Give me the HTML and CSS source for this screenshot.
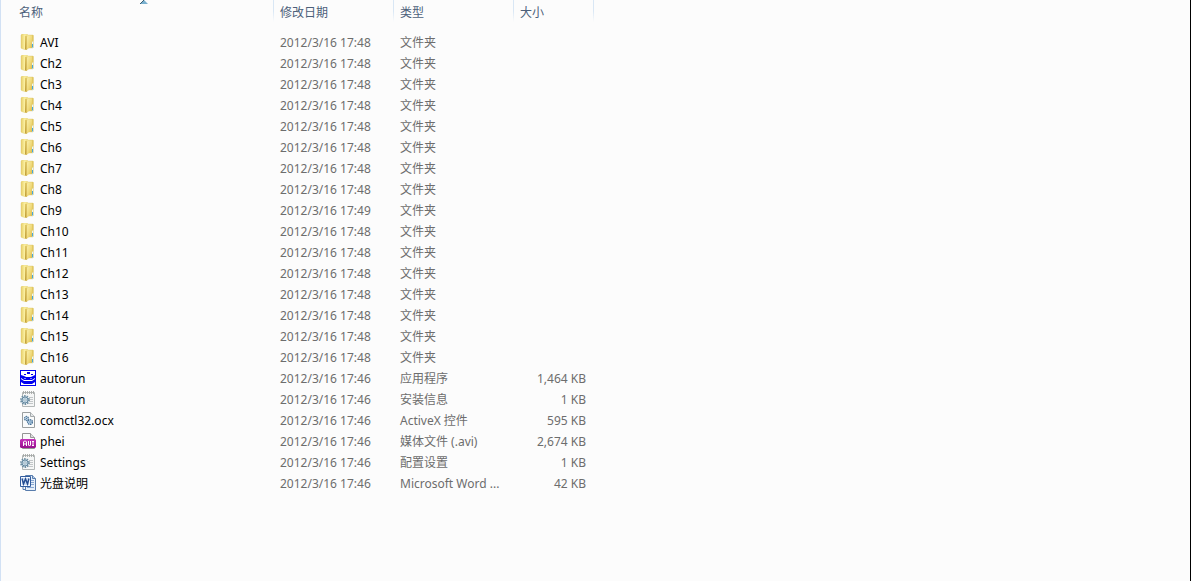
FILE: index.html
```
<!DOCTYPE html>
<html lang="zh-CN">
<head>
<meta charset="utf-8">
<title>文件列表</title>
<link rel="stylesheet" href="styles.css">
</head>
<body>
<svg class="sprite" aria-hidden="true">
  <defs>
    <linearGradient id="gold" x1="0" x2="1" y1="0" y2="0">
      <stop offset="0" stop-color="#e6cd66"/><stop offset=".3" stop-color="#fbf1a4"/><stop offset="1" stop-color="#dfc258"/>
    </linearGradient>
    <linearGradient id="flap" x1="0" x2="1" y1="0" y2="1">
      <stop offset="0" stop-color="#faf1b0"/><stop offset=".55" stop-color="#efd97a"/><stop offset="1" stop-color="#d8b546"/>
    </linearGradient>
    <linearGradient id="crease" x1="0" x2="0" y1="0" y2="1">
      <stop offset="0" stop-color="#e3ca69"/><stop offset="1" stop-color="#bf9b35"/>
    </linearGradient>
    <linearGradient id="pink" x1="0" x2="0" y1="0" y2="1">
      <stop offset="0" stop-color="#c432ba"/><stop offset="1" stop-color="#98108e"/>
    </linearGradient>
  </defs>
  <symbol id="folder" viewBox="0 0 16 16">
    <path d="M2 0h5l1 1h5l.5.5v12l-.5.5H8L6 16l-4.500-1.500L1 14V1z" fill="url(#gold)" stroke="#dfc972" stroke-width=".4"/>
    <path d="M5 2l1.500-.5L7.500 3v12L6 16l-1-1z" fill="url(#crease)"/>
    <path d="M7 3l1.500-1.500H12V14H9l-2.500 1.800z" fill="url(#flap)"/>
    <path d="M12 8l1.300-1v7H12z" fill="#e8f4f5"/>
    <path d="M12 10h1v3.500h-1z" fill="#48a6d8"/>
  </symbol>
  <symbol id="app" viewBox="0 0 16 16">
    <path d="M0 0h16v16H0z" fill="#0000f0"/>
    <path d="M1 1h14v14H1z" fill="#fff"/>
    <path d="M7 2h3v2H7zM4 4h2v1H4zM11 4h2v1h-2z" fill="#0000f0"/>
    <path d="M1 5l3 1 2 1h5l2-1 2-1v3l-3 2H4L1 8z" fill="#0000f0"/>
    <path d="M1 9l3 2h8l3-2v3l-3 2H4l-3-2z" fill="#0000f0"/>
    <path d="M4 8h2v1H4zM10 8h2v1h-2z" fill="#7f7ff8"/>
  </symbol>
  <symbol id="config" viewBox="0 0 16 16">
    <path d="M2.500 1.500h12v14h-12z" fill="#f5f6f6" stroke="#b2b7b7"/>
    <path d="M3.500 0v3M5.500 0v3M7.500 0v3M9.500 0v3M11.500 0v3M13.500 0v3" stroke="#a5a7a5" stroke-width=".9"/>
    <path d="M9 6.500h4M9 8.500h4M10 10.500h3M9 12.500h4" stroke="#c2c6c8"/>
    <circle cx="5" cy="9" r="4" fill="#e6f1f7" stroke="#6d8da1" stroke-width="1.800" stroke-dasharray="1.500 1"/>
    <circle cx="5" cy="9" r="3" fill="#c9dde9" stroke="#6689a0"/>
    <circle cx="5" cy="9" r="1.200" fill="#fff" stroke="#678ba1" stroke-width=".6"/>
  </symbol>
  <symbol id="control" viewBox="0 0 16 16">
    <path d="M2.500.5h8l4 4v11h-12z" fill="#fafbfb" stroke="#9b9fa0"/>
    <path d="M10.500.5v4h4" fill="#e4e7e8" stroke="#a5aaac"/>
    <circle cx="6.500" cy="6.500" r="1.900" fill="#e4f4ff" stroke="#52799b" stroke-width="1.500" stroke-dasharray="1.300 .5"/>
    <circle cx="10" cy="10" r="2.300" fill="#d9efff" stroke="#456f96" stroke-width="1.500" stroke-dasharray="1.400 .5"/>
    <circle cx="6.500" cy="6.500" r=".6" fill="#416b91"/>
    <circle cx="10" cy="10" r=".8" fill="#416b91"/>
  </symbol>
  <symbol id="avi" viewBox="0 0 16 16">
    <path d="M2.500.5h8l4 4v11h-12z" fill="#fafafa" stroke="#949494"/>
    <path d="M10.500.5v4h4" fill="#ddd" stroke="#999"/>
    <path d="M1 6h14l1 1v7l-1 1H1l-1-1V7z" fill="url(#pink)"/>
    <path d="M3.500 13V9l1-1h1l1 1v4M3.500 11h3M8.500 8v4l1 1 1-1V8M12 8.500h2M13 8.500v4M12 12.500h2" fill="none" stroke="#fff"/>
  </symbol>
  <symbol id="word" viewBox="0 0 16 16">
    <path d="M5.500.500h7l3 3v12h-10z" fill="#e6effa" stroke="#587cac"/>
    <path d="M12.500.500v3h3" fill="#b8cee9" stroke="#587cac"/>
    <path d="M11 5.500h3M11 7.500h3M11 9.500h3M7 12.500h7" stroke="#86a6d1"/>
    <path d="M.5 1.500h10v10H.5z" fill="#f5f9ff" stroke="#325c9e"/>
    <path d="M2 3h7v7H2z" fill="#cbdcf3"/>
    <path d="M2 3.500l1.500 5.500 2-5 2 5L9 3.500" fill="none" stroke="#234b91" stroke-width="1.400"/>
    <path d="M3 12v2.500h3" fill="none" stroke="#587cac"/>
  </symbol>
</svg>
<main class="pane">
  <table class="files">
    <colgroup><col class="col-name"><col class="col-date"><col class="col-type"><col class="col-size"></colgroup>
    <thead>
      <tr>
        <th aria-sort="ascending"><button class="sort" type="button">名称</button><svg class="arrow" viewBox="0 0 8 4" aria-hidden="true"><path d="M4 0l4 4H0z" fill="#79b0cf"/><path d="M4 0L0 4" stroke="#3c5e72"/></svg></th>
        <th><button class="sort" type="button">修改日期</button></th>
        <th><button class="sort" type="button">类型</button></th>
        <th><button class="sort" type="button">大小</button></th>
      </tr>
    </thead>
    <tbody id="rows"></tbody>
  </table>
</main>
<script src="files.js"></script>
</body>
</html>
```

FILE: styles.css
```
* {
  box-sizing: border-box;
}

body {
  margin: 0;
  background: #fcfcfc;
  color: #6d6d6d;
  font-family: "Noto Sans", "Noto Sans CJK SC", sans-serif;
  font-size: 12px;
  line-height: 20px;
}

.sprite {
  position: absolute;
  width: 0;
  height: 0;
}

.pane {
  min-height: 100vh;
  border-left: 1px solid #d2e1f4;
  border-right: 1px solid #000;
}

.files {
  table-layout: fixed;
  width: 593px;
  border-collapse: collapse;
}

.col-name {
  width: 273px;
}

.col-date,
.col-type {
  width: 120px;
}

.col-size {
  width: 80px;
}

th {
  position: relative;
  height: 32px;
  padding: 3px 6px 0;
  text-align: left;
  vertical-align: top;
  background: linear-gradient(#d9e7f5 50%, #fcfcfc) right top / 1px 22px no-repeat;
}

th:first-child {
  padding-left: 18px;
}

.sort {
  display: block;
  padding: 0;
  border: 0;
  background: none;
  color: #4c607a;
  font: inherit;
  font-weight: 400;
}

.arrow {
  position: absolute;
  top: 0;
  left: 139px;
  width: 8px;
  height: 4px;
}

td {
  height: 21px;
  padding: 0 6px;
  overflow: hidden;
  text-overflow: ellipsis;
  white-space: nowrap;
}

td:first-child {
  padding-left: 19px;
}

td:last-child {
  padding-right: 8px;
  text-align: right;
}

.name {
  display: flex;
  align-items: center;
  gap: 4px;
  color: #000;
}

.icon {
  flex: none;
  width: 16px;
  height: 16px;
  margin-bottom: 2px;
}
```

FILE: files.js
```
const folders = ["AVI"];
for (let i = 2; i <= 16; i += 1) folders.push("Ch" + i);

const files = folders.map((name) => [
  "folder", name, name === "Ch9" ? "2012/3/16 17:49" : "2012/3/16 17:48", "文件夹", ""
]).concat([
  ["app", "autorun", "2012/3/16 17:46", "应用程序", "1,464 KB"],
  ["config", "autorun", "2012/3/16 17:46", "安装信息", "1 KB"],
  ["control", "comctl32.ocx", "2012/3/16 17:46", "ActiveX 控件", "595 KB"],
  ["avi", "phei", "2012/3/16 17:46", "媒体文件 (.avi)", "2,674 KB"],
  ["config", "Settings", "2012/3/16 17:46", "配置设置", "1 KB"],
  ["word", "光盘说明", "2012/3/16 17:46", "Microsoft Word ...", "42 KB"]
]);

document.getElementById("rows").innerHTML = files.map(([icon, name, date, type, size]) =>
  `<tr><td><div class="name"><svg class="icon" aria-hidden="true"><use href="#${icon}"/></svg><span>${name}</span></div></td><td>${date}</td><td>${type}</td><td>${size}</td></tr>`
).join("");
```
